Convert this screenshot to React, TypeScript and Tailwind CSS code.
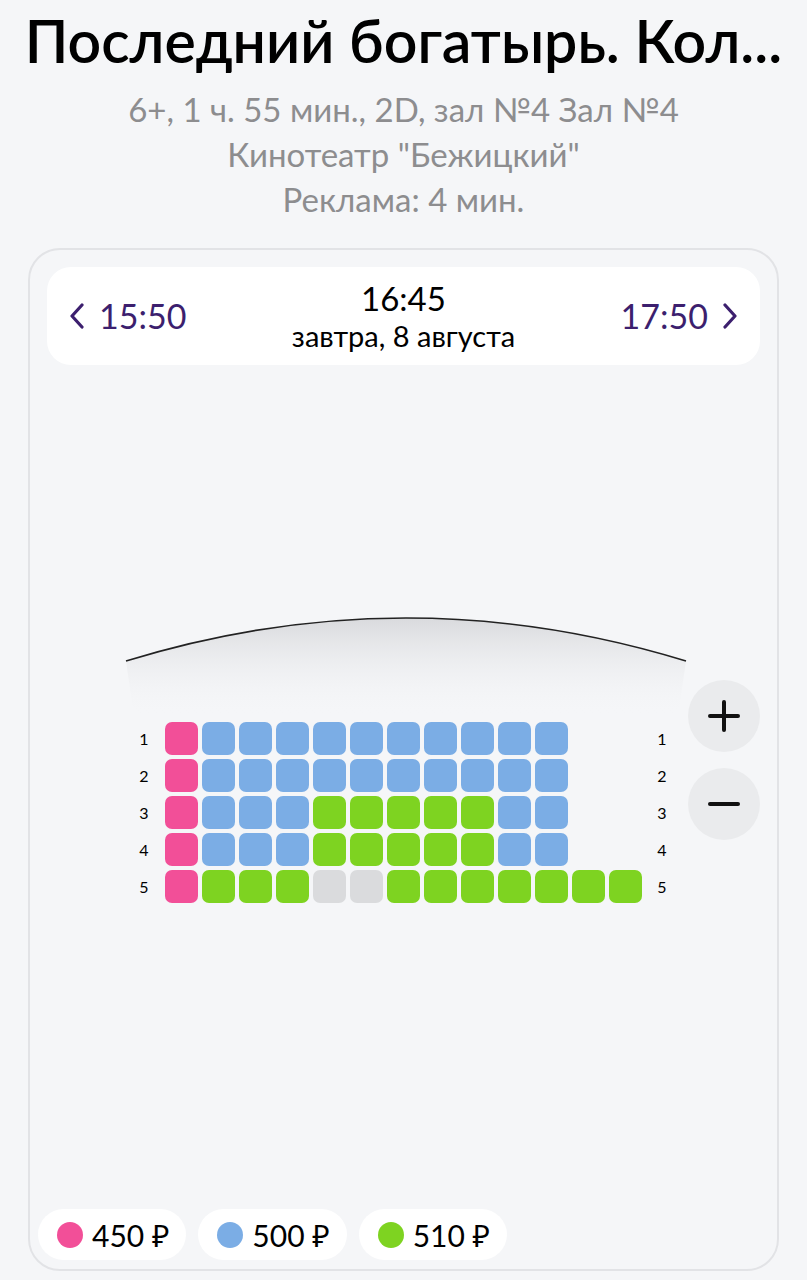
import React from "react";

type C = "p" | "b" | "g" | "x";
const rows: C[][] = [
  ["p", "b", "b", "b", "b", "b", "b", "b", "b", "b", "b"],
  ["p", "b", "b", "b", "b", "b", "b", "b", "b", "b", "b"],
  ["p", "b", "b", "b", "g", "g", "g", "g", "g", "b", "b"],
  ["p", "b", "b", "b", "g", "g", "g", "g", "g", "b", "b"],
  ["p", "g", "g", "g", "x", "x", "g", "g", "g", "g", "g", "g", "g"],
];

const seatClass: Record<C, string> = {
  p: "bg-[#f24f98]",
  b: "bg-[#7badE5]",
  g: "bg-[#7ed321]",
  x: "bg-[#dadbdd]",
};

function Seat({ c }: { c: C }) {
  return <div className={`w-[33px] h-[33px] rounded-[7px] ${seatClass[c]}`} />;
}

function Screen() {
  return (
    <svg width="562" height="100" viewBox="0 0 562 100" className="block">
      <defs>
        <linearGradient id="sg" x1="0" y1="0" x2="0" y2="1">
          <stop offset="0" stopColor="#d9dadd" stopOpacity="1" />
          <stop offset="1" stopColor="#f5f6f8" stopOpacity="0" />
        </linearGradient>
      </defs>
      <path d="M1 45 Q281 -41 561 45 L553 100 L9 100 Z" fill="url(#sg)" />
      <path d="M1 45 Q281 -41 561 45" fill="none" stroke="#222" strokeWidth="1.6" />
    </svg>
  );
}

export default function App() {
  return (
    <div
      className="w-[807px] h-[1280px] bg-[#f5f6f8] overflow-hidden flex flex-col items-center"
      style={{ fontFamily: "Lato, 'Noto Sans', sans-serif" }}
    >
      <h1 className="mt-[5px] text-[59px] leading-[72px] text-black font-semibold whitespace-nowrap tracking-[0px]">
        Последний богатырь. Кол...
      </h1>
      <div className="mt-[10px] text-[33px] leading-[45px] text-[#8d8d8f] text-center">
        <div>6+, 1 ч. 55 мин., 2D, зал №4 Зал №4</div>
        <div>Кинотеатр "Бежицкий"</div>
        <div>Реклама: 4 мин.</div>
      </div>

      <div className="relative mt-[26px] w-[751px] h-[1023px] rounded-[32px] border-2 border-[#e2e3e6] bg-[#f5f6f8] flex flex-col px-[17px] pt-[17px] pb-[9px]">
        <div className="h-[98px] rounded-[24px] bg-white flex items-center justify-between px-[22px]">
          <div className="flex items-center gap-[14px] text-[#3c1f6e]">
            <svg width="16" height="26" viewBox="0 0 16 26">
              <path d="M13 2 L3 13 L13 24" fill="none" stroke="#3c1f6e" strokeWidth="3.2" strokeLinecap="round" strokeLinejoin="round" />
            </svg>
            <span className="text-[34px] leading-none">15:50</span>
          </div>
          <div className="flex flex-col items-center text-black">
            <span className="text-[33px] leading-[40px]">16:45</span>
            <span className="text-[29px] leading-[36px]">завтра, 8 августа</span>
          </div>
          <div className="flex items-center gap-[14px] text-[#3c1f6e]">
            <span className="text-[34px] leading-none">17:50</span>
            <svg width="16" height="26" viewBox="0 0 16 26">
              <path d="M3 2 L13 13 L3 24" fill="none" stroke="#3c1f6e" strokeWidth="3.2" strokeLinecap="round" strokeLinejoin="round" />
            </svg>
          </div>
        </div>

        <div className="flex-1 flex flex-col">
          <div className="mt-[251px] ml-[78px]">
            <Screen />
          </div>
          <div className="mt-[6px] flex flex-col gap-[4px]">
            {rows.map((r, i) => (
              <div key={i} className="flex items-center">
                <div className="ml-[85px] w-[24px] text-center text-[16px] text-black">{i + 1}</div>
                <div className="ml-[9px] w-[477px] flex gap-[4px]">
                  {r.map((c, j) => (
                    <Seat key={j} c={c} />
                  ))}
                </div>
                <div className="ml-[8px] w-[24px] text-center text-[16px] text-black">{i + 1}</div>
              </div>
            ))}
          </div>
        </div>

        <div className="absolute right-[17px] top-[430px] flex flex-col gap-[16px]">
          <div className="w-[72px] h-[72px] rounded-full bg-[#eaebed] flex items-center justify-center">
            <svg width="36" height="36" viewBox="0 0 36 36">
              <path d="M18 4 V32 M4 18 H32" stroke="#111" strokeWidth="4" strokeLinecap="round" />
            </svg>
          </div>
          <div className="w-[72px] h-[72px] rounded-full bg-[#eaebed] flex items-center justify-center">
            <svg width="36" height="36" viewBox="0 0 36 36">
              <path d="M4 18 H32" stroke="#111" strokeWidth="4" strokeLinecap="round" />
            </svg>
          </div>
        </div>

        <div className="flex gap-[12px] -ml-[9px]">
          {[
            ["bg-[#f24f98]", "450 ₽"],
            ["bg-[#7badE5]", "500 ₽"],
            ["bg-[#7ed321]", "510 ₽"],
          ].map(([c, t]) => (
            <div key={t} className="h-[51px] rounded-full bg-white flex items-center pl-[19px] pr-[17px] gap-[9px]">
              <div className={`w-[26px] h-[26px] rounded-full ${c}`} />
              <span className="text-[30px] leading-none text-black">{t}</span>
            </div>
          ))}
        </div>
      </div>
    </div>
  );
}
